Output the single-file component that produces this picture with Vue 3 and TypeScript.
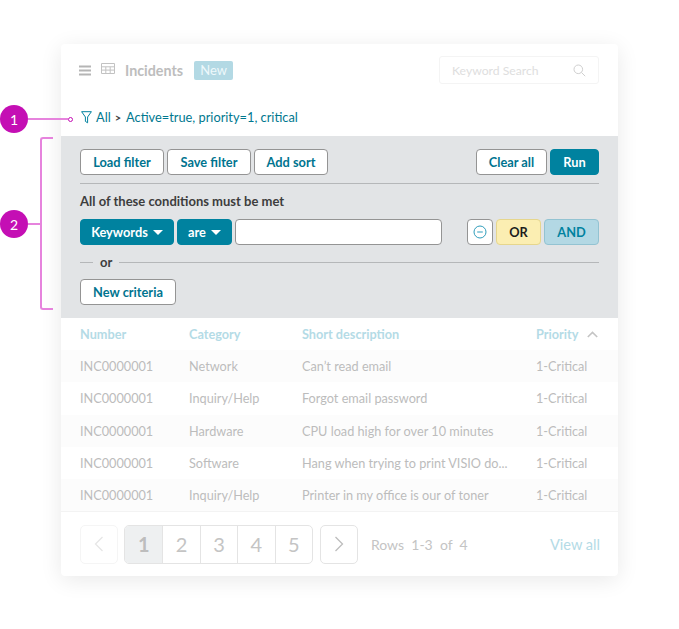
<template>
  <div class="page">
    <section class="card">
      <header class="top">
        <svg class="menu-icon" width="12" height="11" viewBox="0 0 12 11">
          <path d="M0 1.5h12M0 5.5h12M0 9.5h12" stroke="#b5b5b5" stroke-width="2" fill="none" />
        </svg>
        <svg class="grid-icon" width="14" height="12" viewBox="0 0 14 12">
          <path
            d="M.5.5h13v10h-13zM.5 3.8h13M.5 7.1h13M4.8 3.8v6.7M9.2 3.8v6.7"
            stroke="#c2c2c2"
            fill="none"
          />
        </svg>
        <span class="title">Incidents</span>
        <span class="badge">New</span>
        <div class="search">
          <span>Keyword Search</span>
          <svg width="13" height="13" viewBox="0 0 13 13">
            <circle cx="5.3" cy="5.3" r="4.3" stroke="#cfcfcf" fill="none" />
            <path d="M8.4 8.4 12.2 12.2" stroke="#cfcfcf" fill="none" />
          </svg>
        </div>
      </header>

      <div class="crumb">
        <svg width="11" height="13" viewBox="0 0 11 13">
          <path
            d="M.6.7h9.8L6.6 6v5.8L4.4 10.4V6z"
            stroke="#00829f"
            stroke-width="1"
            stroke-linejoin="round"
            fill="none"
          />
        </svg>
        <span class="link">All</span>
        <span class="gt">&gt;</span>
        <span class="link">Active=true, priority=1, critical</span>
      </div>

      <div class="filter">
        <div class="actions">
          <button class="btn load">Load filter</button>
          <button class="btn save">Save filter</button>
          <button class="btn sort">Add sort</button>
          <span class="spacer"></span>
          <button class="btn clear">Clear all</button>
          <button class="btn primary run">Run</button>
        </div>
        <div class="rule"></div>
        <p class="cond-title">All of these conditions must be met</p>
        <div class="cond-row">
          <button class="btn primary keywords">Keywords<i class="caret"></i></button>
          <button class="btn primary are">are<i class="caret"></i></button>
          <div class="value"></div>
          <button class="btn minus" aria-label="Remove">
            <svg width="14" height="14" viewBox="0 0 14 14">
              <circle cx="7" cy="7" r="6" stroke="#2f9dbb" fill="none" />
              <path d="M4.2 7h5.6" stroke="#2f9dbb" fill="none" />
            </svg>
          </button>
          <button class="btn or">OR</button>
          <button class="btn and">AND</button>
        </div>
        <div class="or-row">
          <span class="short"></span>
          <span class="or-text">or</span>
          <span class="long"></span>
        </div>
        <button class="btn criteria">New criteria</button>
      </div>

      <div class="table">
        <div class="row head">
          <span>Number</span>
          <span>Category</span>
          <span>Short description</span>
          <span class="prio">
            Priority
            <svg width="11" height="7" viewBox="0 0 11 7">
              <path d="M.8 6 5.5 1.4 10.2 6" stroke="#c4c4c4" stroke-width="1.6" fill="none" />
            </svg>
          </span>
        </div>
        <div v-for="(item, i) in incidents" :key="i" class="row item">
          <span>INC0000001</span>
          <span>{{ item.category }}</span>
          <span>{{ item.text }}</span>
          <span>1-Critical</span>
        </div>
      </div>

      <footer class="foot">
        <button class="nav faded" aria-label="Previous">
          <svg width="10" height="16" viewBox="0 0 10 16">
            <path d="M8.5 1 1.5 8l7 7" stroke="#e6e6e6" stroke-width="1.3" fill="none" />
          </svg>
        </button>
        <div class="pager">
          <span v-for="n in 5" :key="n" class="page-num" :class="{ current: n === 1 }">{{ n }}</span>
        </div>
        <button class="nav" aria-label="Next">
          <svg width="10" height="16" viewBox="0 0 10 16">
            <path d="M1.5 1 8.5 8l-7 7" stroke="#bdbdbd" stroke-width="1.3" fill="none" />
          </svg>
        </button>
        <span class="rows">Rows&nbsp; 1-3&nbsp; of&nbsp; 4</span>
        <span class="view-all">View all</span>
      </footer>
    </section>

    <!-- callouts sit over the card edge -->
    <div class="marker m1">1</div>
    <div class="lead l1"></div>
    <div class="dot"></div>
    <div class="marker m2">2</div>
    <div class="lead l2"></div>
    <div class="bracket"></div>
  </div>
</template>

<script setup lang="ts">
interface Incident {
  category: string
  text: string
}

const incidents: Incident[] = [
  { category: 'Network', text: 'Can’t read email' },
  { category: 'Inquiry/Help', text: 'Forgot email password' },
  { category: 'Hardware', text: 'CPU load high for over 10 minutes' },
  { category: 'Software', text: 'Hang when trying to print VISIO do...' },
  { category: 'Inquiry/Help', text: 'Printer in my office is our of toner' },
]
</script>

<style>
body {
  background: #fff;
}
</style>

<style scoped>
.page {
  position: relative;
  width: 679px;
  height: 629px;
  padding: 44px 0 0 61px;
  box-sizing: border-box;
  overflow: hidden;
  font-family: Lato, "Open Sans", sans-serif;
}

.card {
  width: 557px;
  height: 532px;
  display: flex;
  flex-direction: column;
  background: #fff;
  border-radius: 4px;
  box-shadow: 0 4px 22px rgba(0, 0, 0, 0.09);
}

.top {
  display: flex;
  align-items: center;
  height: 28px;
  padding: 12px 19px 0 18px;
}

.grid-icon {
  margin-left: 10px;
  margin-top: -2px;
}

.title {
  margin-left: 10px;
  font-size: 14.3px;
  font-weight: 700;
  color: #bdbdbd;
}

.badge {
  margin-left: 11px;
  width: 39px;
  text-align: center;
  height: 19px;
  line-height: 19px;
  font-size: 13px;
  color: #eef8fb;
  background: #b3d9e4;
  border-radius: 2px;
}

.search {
  margin-left: auto;
  width: 160px;
  height: 28px;
  box-sizing: border-box;
  display: flex;
  align-items: center;
  justify-content: space-between;
  padding: 0 12px 0 12px;
  border: 1px solid #f4f4f4;
  border-radius: 3px;
  font-size: 12.2px;
  color: #dedede;
}

.crumb {
  display: flex;
  align-items: center;
  height: 20px;
  margin-top: 23px;
  padding-left: 20px;
  font-size: 12.8px;
  color: #00788f;
}

.crumb svg {
  margin-right: 4px;
}

.gt {
  margin: 0 5px 0 4px;
  font-size: 11px;
  font-weight: 700;
  color: #444;
}

.filter {
  margin-top: 9px;
  height: 182px;
  box-sizing: border-box;
  padding: 13px 19px 0;
  background: #e2e4e6;
}

.actions,
.cond-row {
  display: flex;
  gap: 3px;
}

.spacer {
  flex: 1;
}

.btn {
  height: 26px;
  box-sizing: border-box;
  padding: 0;
  border: 1px solid #949494;
  border-radius: 4px;
  background: #fff;
  color: #00748f;
  font-family: inherit;
  font-size: 12.8px;
  font-weight: 700;
  white-space: nowrap;
}

.btn.primary {
  border-color: #00829f;
  background: #00829f;
  color: #fff;
}

.load {
  width: 84px;
}

.save {
  width: 84px;
}

.sort {
  width: 74px;
}

.clear {
  width: 71px;
}

.run {
  width: 49px;
}

.rule {
  height: 1px;
  margin-top: 8px;
  background: #b5b7b9;
}

.cond-title {
  margin: 9px 0 9px;
  height: 17px;
  line-height: 17px;
  font-size: 13px;
  font-weight: 700;
  color: #3d3d3d;
}

.keywords {
  width: 94px;
}

.are {
  width: 55px;
}

.caret {
  display: inline-block;
  margin-left: 5px;
  vertical-align: 2px;
  border-left: 5px solid transparent;
  border-right: 5px solid transparent;
  border-top: 5px solid #fff;
}

.value {
  width: 207px;
  height: 26px;
  box-sizing: border-box;
  border: 1px solid #949494;
  border-radius: 4px;
  background: #fff;
}

.minus {
  width: 26px;
  margin-left: 22px;
  display: flex;
  align-items: center;
  justify-content: center;
}

.or {
  width: 45px;
  border-color: #e6d68d;
  background: #fbeeb2;
  color: #1d1d1d;
}

.and {
  width: 55px;
  border-color: #93c3d2;
  background: #b3d8e4;
  color: #00829f;
}

.or-row {
  display: flex;
  align-items: center;
  height: 18px;
  margin-top: 8px;
  font-size: 13px;
  font-weight: 700;
  color: #3d3d3d;
}

.short,
.long {
  height: 1px;
  background: #b5b7b9;
}

.short {
  width: 13px;
}

.long {
  flex: 1;
}

.or-text {
  padding: 0 7px;
}

.criteria {
  display: block;
  width: 96px;
  margin-top: 8px;
}

.row {
  display: grid;
  grid-template-columns: 109px 113px 234px 1fr;
  align-items: center;
  padding-left: 19px;
  padding-right: 19px;
  font-size: 12.7px;
}

.head {
  height: 32px;
  font-weight: 700;
  color: #b4dbe6;
}

.prio {
  display: flex;
  align-items: center;
  justify-content: space-between;
  padding-right: 1px;
}

.item {
  height: 32.3px;
  color: #bcbcbc;
}

.item:nth-child(even) {
  background: #fcfcfc;
}

.foot {
  display: flex;
  align-items: center;
  flex: 1;
  padding: 0 18px 0 19px;
  border-top: 1px solid #f3f3f3;
}

.nav {
  width: 38px;
  height: 39px;
  padding: 0;
  display: flex;
  align-items: center;
  justify-content: center;
  border: 1px solid #e4e4e4;
  border-radius: 5px;
  background: #fff;
}

.nav.faded {
  border-color: #f5f5f5;
}

.pager {
  display: flex;
  height: 39px;
  margin: 0 7px 0 6px;
  box-sizing: border-box;
  border: 1px solid #e4e4e4;
  border-radius: 5px;
  overflow: hidden;
}

.page-num {
  width: 37.4px;
  box-sizing: border-box;
  display: flex;
  align-items: center;
  justify-content: center;
  border-left: 1px solid #e4e4e4;
  font-size: 20px;
  color: #c4c4c4;
}

.page-num:first-child {
  border-left: 0;
}

.page-num.current {
  background: #eef0f1;
  font-weight: 700;
  color: #bdbdbd;
}

.rows {
  margin-left: 13px;
  font-size: 14px;
  color: #c4c4c4;
}

.view-all {
  margin-left: auto;
  font-size: 14.6px;
  color: #b4dbe6;
}

.marker {
  position: absolute;
  left: 0;
  width: 28px;
  height: 28px;
  display: flex;
  align-items: center;
  justify-content: center;
  border-radius: 50%;
  background: #c40fb4;
  font-size: 14px;
  color: #fff;
}

.m1 {
  top: 105px;
}

.m2 {
  top: 210px;
}

.lead {
  position: absolute;
  height: 2px;
  background: #e683dd;
}

.l1 {
  left: 28px;
  top: 118px;
  width: 40px;
}

.l2 {
  left: 28px;
  top: 223px;
  width: 13px;
}

.dot {
  position: absolute;
  left: 68px;
  top: 117px;
  width: 5px;
  height: 5px;
  box-sizing: border-box;
  border: 1px solid #c40fb4;
  border-radius: 50%;
  background: #fff;
}

.bracket {
  position: absolute;
  left: 40px;
  top: 137px;
  width: 13px;
  height: 173px;
  box-sizing: border-box;
  border: 2px solid #e683dd;
  border-right: 0;
  border-radius: 3px 0 0 3px;
}
</style>
